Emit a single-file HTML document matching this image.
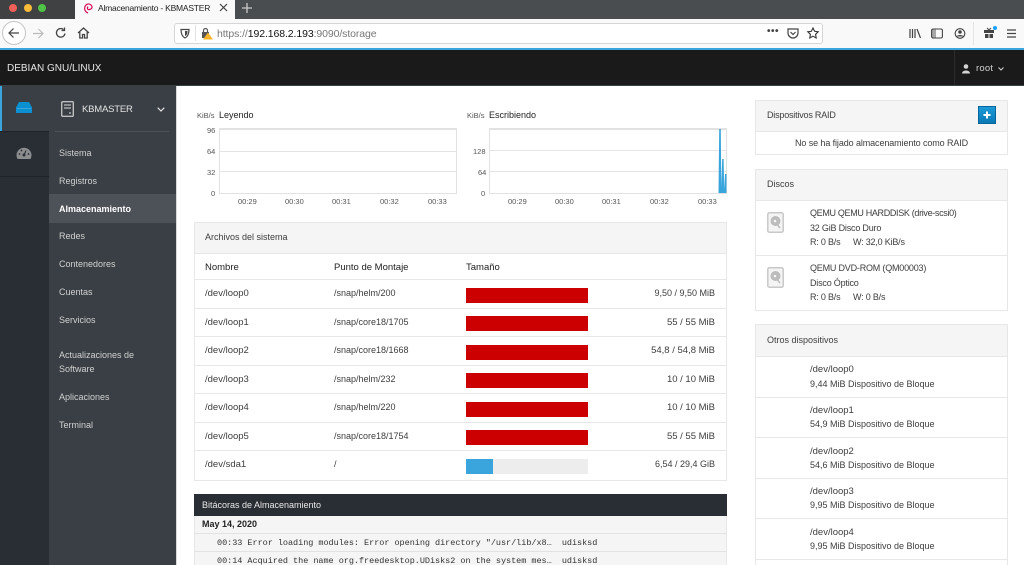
<!DOCTYPE html>
<html lang="es"><head><meta charset="utf-8"><title>Almacenamiento - KBMASTER</title>
<style>
html,body{margin:0;padding:0;width:1024px;height:565px;overflow:hidden;background:#fff}
body{position:relative;font-family:"Liberation Sans",sans-serif;font-size:9px;color:#3d3d3d;letter-spacing:0}
.b{position:absolute;box-sizing:border-box}
.t{position:absolute;white-space:nowrap;line-height:12px}
.m{color:#d1d1d1;left:59px;font-size:9px}
.r{position:absolute;left:466px;width:122px;height:15px;background:#c00}
.rt{position:absolute;right:309px;white-space:nowrap;line-height:12px}
.p{font-size:9.5px;margin-top:1px}
.l{position:absolute;left:195px;width:532px;height:1px;background:#e7e7e7}
.g{position:absolute;height:1px;background:#e4e4e4}
.ax{position:absolute;font-size:7.5px;color:#555;line-height:10px;white-space:nowrap;margin-top:1px}
.mono{font-family:"Liberation Mono",monospace;font-size:8.5px;letter-spacing:-.03px;color:#333;position:absolute;white-space:pre;line-height:12px;margin-top:1px}
.d{letter-spacing:-.2px}
svg{position:absolute;overflow:visible}
</style></head><body>

<!-- browser chrome -->
<div class="b" style="left:0;top:0;width:1024px;height:19px;background:#4a4d4f"></div>
<div class="b" style="left:0;top:0;width:75px;height:19px;background:#3f4143"></div>
<div class="b" style="left:9px;top:4px;width:8px;height:8px;border-radius:50%;background:#ee5f57"></div>
<div class="b" style="left:24px;top:4px;width:8px;height:8px;border-radius:50%;background:#f8bb3a"></div>
<div class="b" style="left:38px;top:4px;width:8px;height:8px;border-radius:50%;background:#4fc248"></div>
<div class="b" style="left:75px;top:0;width:160px;height:19px;background:#f9f9fa"></div>
<svg style="left:83px;top:2px" width="10" height="12" viewBox="0 0 10 12"><path d="M5 11C2 10 1 7 2 4.500S6 1 8 3 9 7 6.500 7.500 4 6 5 4.500" fill="none" stroke="#d70a53" stroke-width="1.200"/></svg>
<div class="t" style="left:98px;top:2px;font-size:8.5px;color:#222;letter-spacing:-.22px">Almacenamiento - KBMASTER</div>
<svg style="left:220px;top:4px" width="7" height="7"><path d="M0 0L7 7M7 0L0 7" stroke="#333" stroke-width="1"/></svg>
<svg style="left:242px;top:3px" width="10" height="10"><path d="M5 0V10M0 5H10" stroke="#c9caca" stroke-width="1.300"/></svg>

<div class="b" style="left:0;top:19px;width:1024px;height:29px;background:#f9f9fa"></div>
<div class="b" style="left:2px;top:21px;width:24px;height:24px;border-radius:50%;background:#fff;border:1px solid #c4c4c6"></div>
<svg style="left:8px;top:27px" width="12" height="12"><path d="M11 6H1M5.500 1.500L1 6L5.500 10.500" fill="none" stroke="#444" stroke-width="1.200"/></svg>
<svg style="left:32px;top:28px" width="12" height="11"><path d="M11 5.500H1M6.500 1L11 5.500L6.500 10" fill="none" stroke="#bbb" stroke-width="1.200"/></svg>
<svg style="left:55px;top:27px" width="12" height="12"><path d="M10 6.500A4.300 4.300 0 1 1 8.500 2.500M9.500 0.500V3.500H6.500" fill="none" stroke="#444" stroke-width="1.300"/></svg>
<svg style="left:77px;top:27px" width="13" height="12"><path d="M1 6L6.500 1L12 6M2.800 5V11H5.500V7.500H7.500V11H10.200V5" fill="none" stroke="#444" stroke-width="1.300"/></svg>
<div class="b" style="left:174px;top:23px;width:649px;height:21px;background:#fff;border:1px solid #d6d6d8;border-radius:3px"></div>
<svg style="left:180px;top:28px" width="10" height="11"><path d="M1 1.500H9C9 6 8 8.500 5 10C2 8.500 1 6 1 1.500Z" fill="none" stroke="#444" stroke-width="1.200"/><path d="M5 3H7.500C7.500 5.500 7 7 5 8Z" fill="#444"/></svg>
<div class="b" style="left:195px;top:25px;width:1px;height:16px;background:#e2e2e3"></div>
<svg style="left:201px;top:27px" width="12" height="13"><rect x="1" y="5" width="7" height="6" fill="#555"/><path d="M2.500 5V3.500A2 2 0 0 1 6.500 3.500V5" fill="none" stroke="#555" stroke-width="1.200"/><path d="M7 5.500L12 12.500H2Z" fill="#f6b42b"/></svg>
<div class="t" style="left:217px;top:28px;font-size:10.5px;color:#777;letter-spacing:-.1px">https://<span style="color:#111">192.168.2.193</span>:9090/storage</div>
<div class="t" style="left:767px;top:26px;font-size:10px;font-weight:bold;color:#444;letter-spacing:.5px">•••</div>
<svg style="left:787px;top:28px" width="12" height="11"><path d="M1 1H11V5C11 8 8.500 10 6 10S1 8 1 5Z" fill="none" stroke="#444" stroke-width="1.200"/><path d="M3.500 4L6 6.500L8.500 4" fill="none" stroke="#444" stroke-width="1.200"/></svg>
<svg style="left:807px;top:27px" width="12" height="12"><path d="M6 1L7.600 4.300L11.200 4.800L8.600 7.300L9.200 11L6 9.200L2.800 11L3.400 7.300L.8 4.800L4.400 4.300Z" fill="none" stroke="#333" stroke-width="1.100"/></svg>
<svg style="left:909px;top:28px" width="12" height="11"><path d="M1 1V10M3.500 1V10M6 1V10M8 1L11.500 10" fill="none" stroke="#444" stroke-width="1.200"/></svg>
<svg style="left:931px;top:28px" width="12" height="11"><rect x=".6" y="1" width="10.800" height="9" rx="1.500" fill="none" stroke="#444" stroke-width="1.100"/><rect x="1" y="1.500" width="4" height="8" fill="#444" opacity=".45"/></svg>
<svg style="left:954px;top:28px" width="12" height="11"><circle cx="6" cy="5.500" r="4.800" fill="none" stroke="#444" stroke-width="1.100"/><circle cx="6" cy="4" r="1.800" fill="#444"/><path d="M2.500 8.500C3.500 6.500 8.500 6.500 9.500 8.500Z" fill="#444"/></svg>
<div class="b" style="left:973px;top:22px;width:1px;height:23px;background:#e5e5e6"></div>
<svg style="left:984px;top:26px" width="14" height="14"><rect x="0" y="4" width="10" height="3" fill="#444"/><rect x="1" y="8" width="3.500" height="4" fill="#444"/><rect x="5.500" y="8" width="3.500" height="4" fill="#444"/><path d="M5 4L3 2M5 4L7 2" stroke="#444"/><circle cx="11" cy="2" r="2" fill="#18a0fb"/></svg>
<svg style="left:1006px;top:29px" width="11" height="9"><path d="M1 1H10M1 4.500H10M1 8H10" stroke="#444" stroke-width="1.300"/></svg>

<!-- navbar -->
<div class="b" style="left:0;top:48px;width:1024px;height:2px;background:#39a5dc"></div>
<div class="b" style="left:0;top:50px;width:1024px;height:36px;background:#1a1a1a;border-bottom:1px solid #3a3f44"></div>
<div class="t" style="left:7px;top:63px;color:#e6e6e6;font-size:10px">DEBIAN GNU/LINUX</div>
<div class="b" style="left:954px;top:50px;width:1px;height:35px;background:#2b2b2b"></div>
<svg style="left:962px;top:64px" width="8" height="10"><circle cx="4" cy="2.500" r="2.300" fill="#d4d4d4"/><path d="M0 9.500C0 5.500 8 5.500 8 9.500Z" fill="#d4d4d4"/></svg>
<div class="t" style="left:976px;top:63px;color:#d1d1d1;font-size:9.5px;letter-spacing:.2px">root</div>
<svg style="left:998px;top:67px" width="6" height="4"><path d="M.5 .5L3 3L5.500 .5" fill="none" stroke="#d1d1d1"/></svg>

<!-- sidebar -->
<div class="b" style="left:0;top:86px;width:49px;height:479px;background:#292e34"></div>
<div class="b" style="left:49px;top:86px;width:127px;height:479px;background:#393f44"></div>
<div class="b" style="left:176px;top:86px;width:1px;height:479px;background:#d9d9d9"></div>
<div class="b" style="left:0;top:86px;width:49px;height:45px;background:#393f44"></div>
<div class="b" style="left:0;top:86px;width:2px;height:45px;background:#39a5dc"></div>
<div class="b" style="left:0;top:131px;width:49px;height:1px;background:#1f2226"></div>
<div class="b" style="left:0;top:176px;width:49px;height:1px;background:#1f2226"></div>
<svg style="left:16px;top:102px" width="16" height="11"><path d="M3 0H13L16 5.500V11H0V5.500Z" fill="#0a8fd1"/><path d="M1 6.500H15" stroke="#39a5dc"/></svg>
<svg style="left:16px;top:147px" width="16" height="12"><path d="M1.500 12A7.500 7.500 0 1 1 14.500 12Z" fill="#8b8d8f"/><circle cx="8" cy="8" r="1.500" fill="#292e34"/><path d="M8 8L10 3.500" stroke="#292e34"/><circle cx="3.500" cy="7" r=".9" fill="#292e34"/><circle cx="12.500" cy="7" r=".9" fill="#292e34"/><circle cx="5.500" cy="3.500" r=".9" fill="#292e34"/></svg>
<svg style="left:61px;top:101px" width="13" height="16"><rect x=".7" y=".7" width="11.600" height="14.600" rx="1" fill="none" stroke="#bdbfc1" stroke-width="1.400"/><path d="M3 4H10M3 7H10M8 12H10" stroke="#bdbfc1" stroke-width="1.200"/></svg>
<div class="t" style="left:82px;top:104px;color:#e3e3e3;font-size:9.5px;letter-spacing:-.2px">KBMASTER</div>
<svg style="left:157px;top:107px" width="8" height="5"><path d="M.7 .7L4 4L7.300 .7" fill="none" stroke="#e3e3e3" stroke-width="1.200"/></svg>
<div class="b" style="left:55px;top:131px;width:114px;height:1px;background:#4d5258"></div>
<div class="b" style="left:49px;top:194px;width:127px;height:29px;background:#4d5258"></div>
<div class="t m" style="top:147px">Sistema</div>
<div class="t m" style="top:175px">Registros</div>
<div class="t m" style="top:203px;color:#fff;font-weight:bold">Almacenamiento</div>
<div class="t m" style="top:230px">Redes</div>
<div class="t m" style="top:258px">Contenedores</div>
<div class="t m" style="top:286px">Cuentas</div>
<div class="t m" style="top:314px">Servicios</div>
<div class="t m" style="top:349px">Actualizaciones de</div>
<div class="t m" style="top:363px">Software</div>
<div class="t m" style="top:391px">Aplicaciones</div>
<div class="t m" style="top:419px">Terminal</div>

<!-- charts -->
<div class="ax" style="left:197px;top:110px">KiB/s</div>
<div class="t" style="left:219px;top:109px;color:#222">Leyendo</div>
<div class="b" style="left:219px;top:128px;width:238px;height:66px;border:1px solid #e2e2e2;border-top:2px solid #e2e2e2"></div>
<div class="g" style="left:219px;top:151px;width:238px"></div>
<div class="g" style="left:219px;top:171px;width:238px"></div>
<div class="ax" style="left:207px;top:125px">96</div>
<div class="ax" style="left:207px;top:146px">64</div>
<div class="ax" style="left:207px;top:167px">32</div>
<div class="ax" style="left:211px;top:188px">0</div>
<div class="ax" style="left:238px;top:196px">00:29</div>
<div class="ax" style="left:285px;top:196px">00:30</div>
<div class="ax" style="left:332px;top:196px">00:31</div>
<div class="ax" style="left:380px;top:196px">00:32</div>
<div class="ax" style="left:428px;top:196px">00:33</div>

<div class="ax" style="left:467px;top:110px">KiB/s</div>
<div class="t" style="left:489px;top:109px;color:#222">Escribiendo</div>
<div class="b" style="left:489px;top:128px;width:238px;height:66px;border:1px solid #e2e2e2;border-top:2px solid #e2e2e2"></div>
<div class="g" style="left:489px;top:150px;width:238px"></div>
<div class="g" style="left:489px;top:171px;width:238px"></div>
<svg style="left:718px;top:129px" width="9" height="64"><path d="M.5 64L1.200 0H2.800L3.300 58L4.200 30H5.600L6.200 60L7 45H8.500V64Z" fill="#39a5dc"/></svg>
<div class="ax" style="left:473px;top:146px">128</div>
<div class="ax" style="left:478px;top:167px">64</div>
<div class="ax" style="left:481px;top:188px">0</div>
<div class="ax" style="left:508px;top:196px">00:29</div>
<div class="ax" style="left:555px;top:196px">00:30</div>
<div class="ax" style="left:602px;top:196px">00:31</div>
<div class="ax" style="left:650px;top:196px">00:32</div>
<div class="ax" style="left:698px;top:196px">00:33</div>

<!-- filesystems panel -->
<div class="b" style="left:194px;top:222px;width:533px;height:259px;border:1px solid #e7e7e7"></div>
<div class="b" style="left:195px;top:223px;width:531px;height:31px;background:#f5f5f5"></div>
<div class="l" style="top:253px"></div>
<div class="t" style="left:205px;top:231px">Archivos del sistema</div>
<div class="t p" style="left:205px;top:261px;color:#222">Nombre</div>
<div class="t p" style="left:334px;top:261px;color:#222">Punto de Montaje</div>
<div class="t p" style="left:466px;top:261px;color:#222">Tamaño</div>
<div class="l" style="top:279px"></div>
<div class="l" style="top:308px"></div>
<div class="l" style="top:336px"></div>
<div class="l" style="top:365px"></div>
<div class="l" style="top:393px"></div>
<div class="l" style="top:422px"></div>
<div class="l" style="top:450px"></div>

<div class="t p" style="left:205px;top:287px">/dev/loop0</div><div class="t" style="left:334px;top:287px">/snap/helm/200</div><div class="r" style="top:288px"></div><div class="rt" style="top:287px">9,50 / 9,50 MiB</div>
<div class="t p" style="left:205px;top:316px">/dev/loop1</div><div class="t" style="left:334px;top:316px">/snap/core18/1705</div><div class="r" style="top:316px"></div><div class="rt p" style="top:316px">55 / 55 MiB</div>
<div class="t p" style="left:205px;top:344px">/dev/loop2</div><div class="t" style="left:334px;top:344px">/snap/core18/1668</div><div class="r" style="top:345px"></div><div class="rt p" style="top:344px">54,8 / 54,8 MiB</div>
<div class="t p" style="left:205px;top:373px">/dev/loop3</div><div class="t" style="left:334px;top:373px">/snap/helm/232</div><div class="r" style="top:373px"></div><div class="rt p" style="top:373px">10 / 10 MiB</div>
<div class="t p" style="left:205px;top:401px">/dev/loop4</div><div class="t" style="left:334px;top:401px">/snap/helm/220</div><div class="r" style="top:402px"></div><div class="rt p" style="top:401px">10 / 10 MiB</div>
<div class="t p" style="left:205px;top:430px">/dev/loop5</div><div class="t" style="left:334px;top:430px">/snap/core18/1754</div><div class="r" style="top:430px"></div><div class="rt p" style="top:430px">55 / 55 MiB</div>
<div class="t p" style="left:205px;top:458px">/dev/sda1</div><div class="t" style="left:334px;top:458px">/</div><div class="r" style="top:459px;background:#ededed"></div><div class="b" style="left:466px;top:459px;width:27px;height:15px;background:#39a5dc"></div><div class="rt" style="top:458px">6,54 / 29,4 GiB</div>

<!-- logs -->
<div class="b" style="left:194px;top:494px;width:533px;height:22px;background:#292e34"></div>
<div class="t" style="left:202px;top:499px;color:#e8e8e8">Bitácoras de Almacenamiento</div>
<div class="b" style="left:194px;top:516px;width:533px;height:49px;background:#f5f5f5;border-left:1px solid #e7e7e7;border-right:1px solid #e7e7e7"></div>
<div class="l" style="top:533px;background:#e2e2e2"></div>
<div class="l" style="top:551px;background:#e2e2e2"></div>
<div class="t" style="left:202px;top:518px;font-weight:bold;color:#222">May 14, 2020</div>
<div class="mono" style="left:217px;top:536px">00:33 Error loading modules: Error opening directory "/usr/lib/x8…  udisksd</div>
<div class="mono" style="left:217px;top:554px">00:14 Acquired the name org.freedesktop.UDisks2 on the system mes…  udisksd</div>

<!-- raid -->
<div class="b" style="left:755px;top:100px;width:253px;height:55px;border:1px solid #e7e7e7"></div>
<div class="b" style="left:756px;top:101px;width:251px;height:31px;background:#f5f5f5;border-bottom:1px solid #e7e7e7"></div>
<div class="t d" style="left:767px;top:109px">Dispositivos RAID</div>
<div class="b" style="left:978px;top:106px;width:18px;height:18px;background:linear-gradient(#1e9ad8,#0a78b5);border:1px solid #00659c"></div>
<svg style="left:983px;top:111px" width="8" height="8"><path d="M4 .5V7.500M.5 4H7.500" stroke="#fff" stroke-width="2"/></svg>
<div class="t" style="left:795px;top:137px;letter-spacing:-.1px">No se ha fijado almacenamiento como RAID</div>

<!-- discos -->
<div class="b" style="left:755px;top:169px;width:253px;height:142px;border:1px solid #e7e7e7"></div>
<div class="b" style="left:756px;top:170px;width:251px;height:31px;background:#f5f5f5;border-bottom:1px solid #e7e7e7"></div>
<div class="t" style="left:767px;top:178px">Discos</div>
<div class="l" style="left:756px;width:251px;top:255px"></div>
<svg style="left:767px;top:212px" width="17" height="21"><rect x=".8" y=".8" width="15.400" height="19.400" rx="1.500" fill="#f4f4f4" stroke="#c8c8c8" stroke-width="1.500"/><circle cx="8.500" cy="9" r="5" fill="#bcbcbc"/><circle cx="8" cy="9" r="1.300" fill="#f4f4f4"/><path d="M9 11L13 16" stroke="#bcbcbc" stroke-width="1.500"/></svg>
<svg style="left:767px;top:267px" width="17" height="21"><rect x=".8" y=".8" width="15.400" height="19.400" rx="1.500" fill="#f4f4f4" stroke="#c8c8c8" stroke-width="1.500"/><circle cx="8.500" cy="9" r="5" fill="#bcbcbc"/><circle cx="8" cy="9" r="1.300" fill="#f4f4f4"/><path d="M9 11L13 16" stroke="#bcbcbc" stroke-width="1.500"/></svg>
<div class="t" style="left:810px;top:207px;letter-spacing:-.33px">QEMU QEMU HARDDISK (drive-scsi0)</div>
<div class="t d" style="left:810px;top:222px">32 GiB Disco Duro</div>
<div class="t d" style="left:810px;top:236px">R: 0 B/s</div><div class="t d" style="left:853px;top:236px">W: 32,0 KiB/s</div>
<div class="t" style="left:810px;top:262px;letter-spacing:-.2px">QEMU DVD-ROM (QM00003)</div>
<div class="t d" style="left:810px;top:277px">Disco Óptico</div>
<div class="t d" style="left:810px;top:291px">R: 0 B/s</div><div class="t d" style="left:853px;top:291px">W: 0 B/s</div>

<!-- otros -->
<div class="b" style="left:755px;top:324px;width:253px;height:241px;border:1px solid #e7e7e7;border-bottom:0"></div>
<div class="b" style="left:756px;top:325px;width:251px;height:32px;background:#f5f5f5;border-bottom:1px solid #e7e7e7"></div>
<div class="t" style="left:767px;top:334px">Otros dispositivos</div>
<div class="l" style="left:756px;width:251px;top:397px"></div>
<div class="l" style="left:756px;width:251px;top:437px"></div>
<div class="l" style="left:756px;width:251px;top:478px"></div>
<div class="l" style="left:756px;width:251px;top:518px"></div>
<div class="l" style="left:756px;width:251px;top:559px"></div>
<div class="t p" style="left:810px;top:363px">/dev/loop0</div><div class="t" style="left:810px;top:378px">9,44 MiB Dispositivo de Bloque</div>
<div class="t p" style="left:810px;top:404px">/dev/loop1</div><div class="t" style="left:810px;top:418px">54,9 MiB Dispositivo de Bloque</div>
<div class="t p" style="left:810px;top:445px">/dev/loop2</div><div class="t" style="left:810px;top:459px">54,6 MiB Dispositivo de Bloque</div>
<div class="t p" style="left:810px;top:485px">/dev/loop3</div><div class="t" style="left:810px;top:499px">9,95 MiB Dispositivo de Bloque</div>
<div class="t p" style="left:810px;top:526px">/dev/loop4</div><div class="t" style="left:810px;top:540px">9,95 MiB Dispositivo de Bloque</div>
</body></html>
